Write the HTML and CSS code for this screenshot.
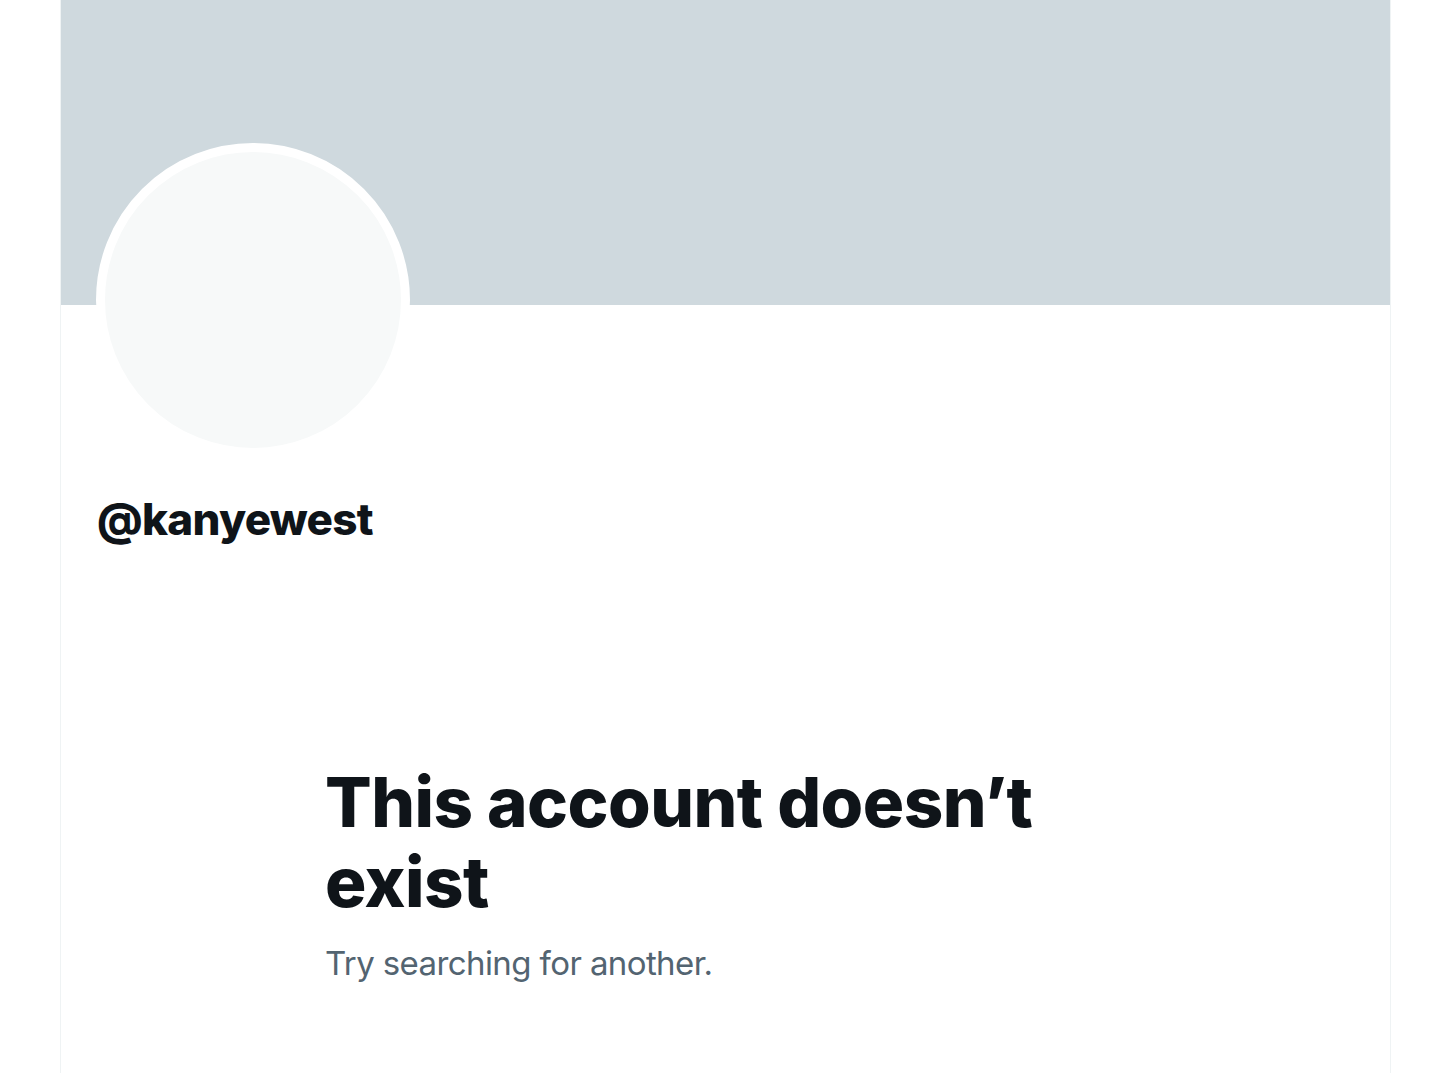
FILE: index.html
```html
<!DOCTYPE html>
<html lang="en">
<head>
<meta charset="utf-8">
<title>Profile</title>
<link rel="stylesheet" href="styles.css">
</head>
<body>
<main class="column">
  <div class="banner"></div>
  <div class="avatar"></div>
  <div class="handle">@kanyewest</div>
  <section class="empty">
    <h1 class="empty-title">This account doesn’t exist</h1>
    <p class="empty-sub">Try searching for another.</p>
  </section>
</main>
</body>
</html>
```
FILE: styles.css
```css
html, body {
  margin: 0;
  padding: 0;
  background: #ffffff;
}
body {
  font-family: Inter, "Noto Sans", "Liberation Sans", sans-serif;
  color: #0f1419;
  height: 1073px;
  overflow: hidden;
}
.column {
  margin-left: 60px;
  width: 1329px;
  min-height: 1073px;
  border-left: 1px solid #eff3f4;
  border-right: 1px solid #eff3f4;
  display: flex;
  flex-direction: column;
}
.banner {
  height: 305px;
  background: #cfd9de;
}
.avatar {
  width: 296px;
  height: 296px;
  border: 9px solid #ffffff;
  border-radius: 50%;
  margin: -162px 0 0 35px;
  background: #f7f9f9;
}
.handle {
  margin: 34px 0 0 36px;
  font-size: 44px;
  font-weight: 800;
  letter-spacing: -0.7px;
  line-height: 56px;
}
.empty {
  margin: 215px 0 0 264px;
  max-width: 760px;
}
.empty-title {
  margin: 0;
  font-size: 69px;
  font-weight: 800;
  line-height: 80px;
  letter-spacing: -0.55px;
}
.empty-sub {
  margin: 19px 0 0;
  font-size: 33px;
  line-height: 44px;
  letter-spacing: -0.6px;
  color: #536471;
}
```
